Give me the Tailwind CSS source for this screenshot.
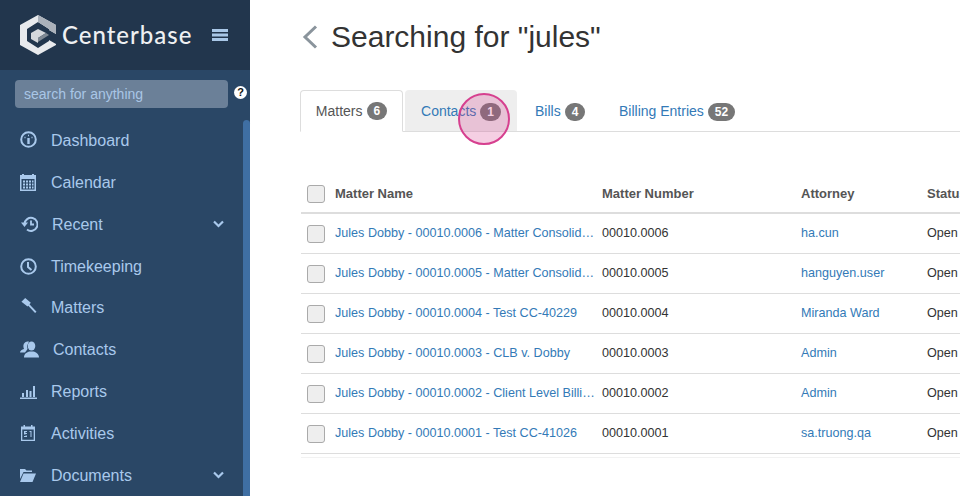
<!doctype html>
<html>

<head>
    <meta charset="UTF-8">
    <meta name="viewport" content="width=device-width, initial-scale=1.0">
    <script src="https://cdn.jsdelivr.net/npm/@tailwindcss/browser@4"></script>
</head>

<body class="w-[960px] h-[496px] overflow-hidden bg-white font-['Liberation_Sans',Arial,sans-serif]">
    <div class="flex h-[496px]">
        <aside class="w-[250px] shrink-0 bg-[#2a4766] flex flex-col">
            <div class="h-[70px] bg-[#22364d] flex items-center pl-[20px] shrink-0">
                <svg class="w-[36px] h-[40px] shrink-0" viewBox="0 0 36 40">
                    <path d="M18 0L36 10V19L29 15V14L18 7L7 14V26L18 33L29 26V25L36 29V30L18 40L0 30V10Z" fill="#e8eaed"></path>
                    <path d="M18 0L36 10V19L29 15V14L18 7Z" fill="#aab1ba"></path>
                    <path d="M11 18L18 14L26 18L18 23V28L11 24Z" fill="#d5d8dc"></path>
                    <path d="M18 23L26 18L29 20L18 27Z" fill="#7f8994"></path>
                </svg>
                <span class="ml-[6px] text-[24px] leading-none font-['Lato'] font-medium text-[#eef0f2] tracking-[1px]">Centerbase</span>
                <svg class="ml-[20px] w-[16px] h-[12px]" viewBox="0 0 16 12" fill="#a9c8e8">
                    <rect y="0" width="16" height="3"></rect>
                    <rect y="4.5" width="16" height="3"></rect>
                    <rect y="9" width="16" height="3"></rect>
                </svg>
            </div>
            <div class="relative flex-1">
                <div class="flex items-center pl-[15px] pt-[10px]">
                    <div class="w-[213px] h-[28px] rounded-[4px] bg-[#6b8098] flex items-center pl-[9px] text-[14px] text-[#a9c6e6]">search for anything</div>
                    <span class="ml-[6px] mb-[4px] w-[13px] h-[13px] rounded-full bg-white text-[#111] text-[11px] leading-[13px] font-bold text-center">?</span>
                </div>
                <div class="absolute right-0 top-[50px] bottom-0 w-[7px] rounded-t-[4px] bg-[#3f6fa3]"></div>
                <nav class="mt-[12px] text-[16px] text-[#a9c9ec]">
                    <a class="flex items-center h-[42px] pl-[20px]">
                        <svg class="w-[17px] h-[17px] shrink-0 mb-[4px]" viewBox="0 0 17 17" fill="none" stroke="currentColor">
                            <circle cx="8.5" cy="8.5" r="7.3" stroke-width="2"></circle>
                            <path d="M8.5 7v6" stroke-width="2.4"></path>
                            <path d="M4.5 6.5h1M8 4.5h1M11.5 6.5h1" stroke-width="1.6"></path>
                        </svg>
                        <span class="ml-[14px]">Dashboard</span>
                    </a>
                    <a class="flex items-center h-[42px] pl-[20px]">
                        <svg class="w-[16px] h-[17px] shrink-0 mb-[2px]" viewBox="0 0 16 17" fill="currentColor">
                            <path d="M0 1h2V0h2v1h8V0h2v1h2v16H0zM1.5 5v10.5h13V5z"></path>
                            <path d="M3 6.5h2v2H3zM6 6.5h2v2H6zM9 6.5h2v2H9zM12 6.5h1.500v2H12zM3 9.500h2v2H3zM6 9.500h2v2H6zM9 9.500h2v2H9zM12 9.500h1.500v2H12zM3 12.500h2v2H3zM6 12.500h2v2H6zM9 12.500h2v2H9zM12 12.500h1.500v2H12z"></path>
                        </svg>
                        <span class="ml-[15px]">Calendar</span>
                    </a>
                    <a class="flex items-center h-[42px] pl-[21px]">
                        <svg class="w-[17px] h-[16px] shrink-0 mb-[2px]" viewBox="0 0 17 16" fill="none" stroke="currentColor" stroke-width="2">
                            <path d="M3.500 8A6.500 6.500 0 1 1 6 13.500"></path>
                            <path d="M0 6.500h7L3.500 11z" fill="currentColor" stroke="none"></path>
                            <path d="M10 4.500V8.500H13" stroke-width="1.800"></path>
                        </svg>
                        <span class="ml-[14px]">Recent</span>
                        <svg class="ml-auto mr-[26px] w-[11px] h-[8px] mb-[2px]" viewBox="0 0 11 8" fill="none" stroke="currentColor" stroke-width="2.200">
                            <path d="M1 1.500l4.500 4.500L10 1.500"></path>
                        </svg>
                    </a>
                    <a class="flex items-center h-[42px] pl-[20px]">
                        <svg class="w-[17px] h-[17px] shrink-0 mb-[2px]" viewBox="0 0 17 17" fill="none" stroke="currentColor" stroke-width="2">
                            <circle cx="8.500" cy="8.500" r="7.300"></circle>
                            <path d="M8 4v5l3.500 3"></path>
                        </svg>
                        <span class="ml-[14px]">Timekeeping</span>
                    </a>
                    <a class="flex items-center h-[41px] pb-[2px] pl-[20px]">
                        <svg class="w-[17px] h-[16px] shrink-0 mb-[3px]" viewBox="0 0 17 17" fill="currentColor">
                            <path d="M5 0l6 5-3.500 4L1 4z"></path>
                            <path d="M7.500 7.500l1.500-1.500 8 8.500-1.500 1.500z"></path>
                        </svg>
                        <span class="ml-[14px]">Matters</span>
                    </a>
                    <a class="flex items-center h-[42px] pl-[20px]">
                        <svg class="w-[19px] h-[17px] shrink-0 mb-[2px]" viewBox="0 0 19 17" fill="currentColor">
                            <path d="M5 1.500C6.500 0 9 .5 9 .5L7 5l.5 3-1 1.500L5 11.500H0c0-2 2-3 4-3.500C3 6 3 3 5 1.500z"></path>
                            <ellipse cx="11.500" cy="5" rx="3.800" ry="4.600"></ellipse>
                            <path d="M4 16c0-3 3-5 5.500-5.500h4C16 11 19 13 19 16.500H4z"></path>
                        </svg>
                        <span class="ml-[14px]">Contacts</span>
                    </a>
                    <a class="flex items-center h-[42px] pl-[20px]">
                        <svg class="w-[17px] h-[14px] shrink-0 mb-[1px]" viewBox="0 0 17 14" fill="currentColor">
                            <path d="M2 8h2v4H2zM6 5h2v7H6zM9.500 6h2v6h-2zM13 1h2v11h-2zM0 12.500h17V14H0z"></path>
                        </svg>
                        <span class="ml-[14px]">Reports</span>
                    </a>
                    <a class="flex items-center h-[42px] pl-[21px]">
                        <svg class="w-[14px] h-[16px] shrink-0 mb-[3px]" viewBox="0 0 14 16" fill="currentColor">
                            <path d="M0 1.500h2.500V0h1.500v1.500h6V0h1.500v1.500H14V16H0zM1.300 4.500v10.200h11.400V4.500z"></path>
                            <path d="M3 6h3v1H4.500v1H6v1H4.500v1.500H6V12H3v-1h1.500V9.500H3v-.5zM8.500 6H10.500V12H9.500V7H8.500z"></path>
                        </svg>
                        <span class="ml-[16px]">Activities</span>
                    </a>
                    <a class="flex items-center h-[42px] pl-[20px]">
                        <svg class="w-[16px] h-[13px] shrink-0 mb-[1px]" viewBox="0 0 16 13" fill="currentColor">
                            <path d="M0 0h5l1.500 1.500H12V3H3.500L0 10z"></path>
                            <path d="M3.500 4.500H16L12.500 13H0z"></path>
                        </svg>
                        <span class="ml-[15px]">Documents</span>
                        <svg class="ml-auto mr-[26px] w-[11px] h-[8px] mb-[2px]" viewBox="0 0 11 8" fill="none" stroke="currentColor" stroke-width="2.200">
                            <path d="M1 1.500l4.500 4.500L10 1.500"></path>
                        </svg>
                    </a>
                </nav>
            </div>
        </aside>

        <main class="flex-1 min-w-0 overflow-hidden pl-[50px] relative">
            <div class="flex items-center h-[74px]">
                <svg class="w-[16px] h-[24px] ml-[2px]" viewBox="0 0 16 24" fill="none" stroke="#8a949c" stroke-width="3">
                    <path d="M14 1.500L3 12l11 10.500"></path>
                </svg>
                <h1 class="ml-[13px] text-[30px] leading-none text-[#333]">Searching for "jules"</h1>
            </div>

            <div class="mt-[16px] h-[42px] flex border-b border-[#ddd] text-[14px] w-[660px]">
                <a class="w-[103px] h-[42px] flex items-center justify-center gap-[4px] bg-white border border-[#ddd] border-b-white rounded-t-[4px] text-[#555]">Matters <span class="px-[7px] h-[18px] leading-[18px] rounded-[10px] bg-[#777] text-white text-[12px] font-bold">6</span></a>
                <a class="ml-[2px] w-[112px] h-[41px] pt-[2px] flex items-center justify-center gap-[4px] bg-[#eee] rounded-t-[4px] text-[#337ab7]">Contacts <span class="px-[7px] h-[18px] leading-[18px] rounded-[10px] bg-[#777] text-white text-[12px] font-bold">1</span></a>
                <a class="ml-[2px] w-[84px] h-[41px] pt-[2px] pl-[16px] flex items-center gap-[4px] text-[#337ab7]">Bills <span class="px-[7px] h-[18px] leading-[18px] rounded-[10px] bg-[#777] text-white text-[12px] font-bold">4</span></a>
                <a class="w-[138px] h-[41px] pt-[2px] pl-[16px] flex items-center gap-[4px] text-[#337ab7]">Billing Entries <span class="px-[7px] h-[18px] leading-[18px] rounded-[10px] bg-[#777] text-white text-[12px] font-bold">52</span></a>
            </div>
            <div class="absolute left-[208px] top-[93px] w-[52px] h-[52px] rounded-full border-2 border-[#d6408f] bg-[#d6408f]/25"></div>

            <table class="mt-[43px] ml-[1px] w-[700px] table-fixed border-collapse text-[12.6px] text-[#333]">
                <thead>
                    <tr class="h-[38px] border-b-2 border-[#ddd] text-left text-[#555] text-[13px]">
                        <th class="w-[34px] pl-[6px]"><div class="w-[18px] h-[18px] rounded-[3px] border border-[#aaa] bg-[#eee]"></div></th>
                        <th class="w-[267px] font-bold">Matter Name</th>
                        <th class="w-[199px] font-bold">Matter Number</th>
                        <th class="w-[126px] font-bold">Attorney</th>
                        <th class="font-bold">Status</th>
                    </tr>
                </thead>
                <tbody>
                    <tr class="h-[40px] border-b border-[#ddd]">
                        <td class="pl-[6px] pt-[2px]"><div class="w-[18px] h-[18px] rounded-[3px] border border-[#aaa] bg-[#eee]"></div></td>
                        <td class="pr-[7px] pt-[1px] truncate text-[#337ab7]">Jules Dobby - 00010.0006 - Matter Consolidation</td>
                        <td class="pt-[1px]">00010.0006</td>
                        <td class="pt-[1px] text-[#337ab7]">ha.cun</td>
                        <td class="pt-[1px]">Open</td>
                    </tr>
                    <tr class="h-[40px] border-b border-[#ddd]">
                        <td class="pl-[6px] pt-[2px]"><div class="w-[18px] h-[18px] rounded-[3px] border border-[#aaa] bg-[#eee]"></div></td>
                        <td class="pr-[7px] pt-[1px] truncate text-[#337ab7]">Jules Dobby - 00010.0005 - Matter Consolidation</td>
                        <td class="pt-[1px]">00010.0005</td>
                        <td class="pt-[1px] text-[#337ab7]">hanguyen.user</td>
                        <td class="pt-[1px]">Open</td>
                    </tr>
                    <tr class="h-[40px] border-b border-[#ddd]">
                        <td class="pl-[6px] pt-[2px]"><div class="w-[18px] h-[18px] rounded-[3px] border border-[#aaa] bg-[#eee]"></div></td>
                        <td class="pr-[7px] pt-[1px] truncate text-[#337ab7]">Jules Dobby - 00010.0004 - Test CC-40229</td>
                        <td class="pt-[1px]">00010.0004</td>
                        <td class="pt-[1px] text-[#337ab7]">Miranda Ward</td>
                        <td class="pt-[1px]">Open</td>
                    </tr>
                    <tr class="h-[40px] border-b border-[#ddd]">
                        <td class="pl-[6px] pt-[2px]"><div class="w-[18px] h-[18px] rounded-[3px] border border-[#aaa] bg-[#eee]"></div></td>
                        <td class="pr-[7px] pt-[1px] truncate text-[#337ab7]">Jules Dobby - 00010.0003 - CLB v. Dobby</td>
                        <td class="pt-[1px]">00010.0003</td>
                        <td class="pt-[1px] text-[#337ab7]">Admin</td>
                        <td class="pt-[1px]">Open</td>
                    </tr>
                    <tr class="h-[40px] border-b border-[#ddd]">
                        <td class="pl-[6px] pt-[2px]"><div class="w-[18px] h-[18px] rounded-[3px] border border-[#aaa] bg-[#eee]"></div></td>
                        <td class="pr-[7px] pt-[1px] truncate text-[#337ab7]">Jules Dobby - 00010.0002 - Client Level Billing</td>
                        <td class="pt-[1px]">00010.0002</td>
                        <td class="pt-[1px] text-[#337ab7]">Admin</td>
                        <td class="pt-[1px]">Open</td>
                    </tr>
                    <tr class="h-[40px] border-b border-[#ddd]">
                        <td class="pl-[6px] pt-[2px]"><div class="w-[18px] h-[18px] rounded-[3px] border border-[#aaa] bg-[#eee]"></div></td>
                        <td class="pr-[7px] pt-[1px] truncate text-[#337ab7]">Jules Dobby - 00010.0001 - Test CC-41026</td>
                        <td class="pt-[1px]">00010.0001</td>
                        <td class="pt-[1px] text-[#337ab7]">sa.truong.qa</td>
                        <td class="pt-[1px]">Open</td>
                    </tr>
                </tbody>
            </table>
            <div class="ml-[1px] h-[4px] w-[700px] border-b border-[#f2f2f2]"></div>
        </main>
    </div>
</body>

</html>
